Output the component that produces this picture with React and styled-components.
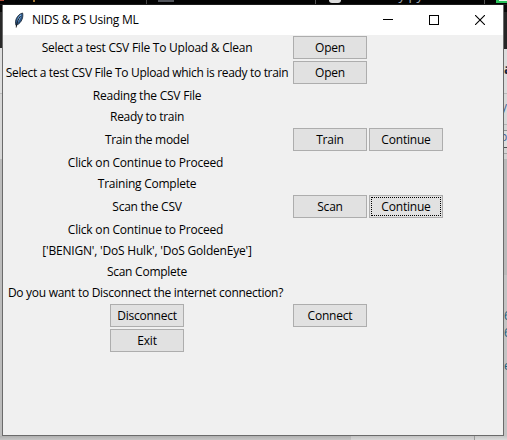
import React from "react";
import styled, { createGlobalStyle } from "styled-components";

const Global = createGlobalStyle`
  * { box-sizing: border-box; }
  body { margin: 0; overflow: hidden; background: #c9c9c9; }
`;

const Desktop = styled.div`
  width: 507px;
  height: 440px;
  overflow: hidden;
  display: grid;
  grid-template-columns: 2px 502px 3px;
  grid-template-rows: 5px 431px 4px;
  font-family: "Open Sans", "Noto Sans", sans-serif;
`;

const TopStrip = styled.div`
  grid-column: 1 / -1;
  position: relative;
  overflow: hidden;
  background: #030303;
  border-bottom: 1px solid #1c1c1c;
`;

const Speck = styled.span`
  position: absolute;
  top: 0;
  left: ${(p) => p.$x}px;
  width: ${(p) => p.$w}px;
  height: ${(p) => p.$h}px;
  background: ${(p) => p.$color};
  border-radius: ${(p) => p.$round || "0"};
`;

const TabText = styled.span`
  position: absolute;
  left: 386px;
  top: -14px;
  font-size: 13px;
  line-height: 18px;
  color: #a5adba;
`;

const LeftEdge = styled.div`
  background: linear-gradient(#080808 0 7px, #292929 7px 43px, #dedede 43px 88px, #bdbdbd 88px 89px, #d7d7d7 89px 154px, #bcbcbc 154px);
`;

const RightEdge = styled.div`
  position: relative;
  overflow: hidden;
  background: linear-gradient(
    #080808 0 7px, #262626 7px 44px, #dcdcdc 44px 88px, #bbb 88px 89px,
    #d9d9d9 89px 119px, #b5b5b5 119px 120px, #d5d5d5 120px 125px, #929292 125px 126px,
    #dedede 126px 142px, #505050 142px 143px, #d5d5d5 143px 148px, #a5a5a5 148px 149px,
    #d3d3d3 149px 154px, #bababa 154px 270px, #c4c4c4 270px
  );
`;

const EdgeGlyph = styled.span`
  position: absolute;
  left: ${(p) => p.$x}px;
  top: ${(p) => p.$y}px;
  font-size: ${(p) => p.$size || 12}px;
  font-weight: ${(p) => p.$weight || 400};
  line-height: 16px;
  color: ${(p) => p.$color};
`;

const BottomEdge = styled.div`
  grid-column: 1 / -1;
  display: grid;
  grid-template-columns: 351px 123px 1px 1fr;
  background: linear-gradient(#b0b0b0, #c6c6c6);
`;

const BottomPart = styled.div`
  background: ${(p) => p.$bg};
`;

const Window = styled.main`
  display: flex;
  flex-direction: column;
  background: #f0f0f0;
  border: 1px solid #6b6b6b;
  border-top: 0;
`;

const TitleBar = styled.header`
  display: flex;
  align-items: center;
  height: 30px;
  flex: none;
  padding-left: 10px;
  background: #fff;
`;

const Feather = styled.svg`
  display: block;
  width: 12px;
  height: 18px;
`;

const Title = styled.h1`
  flex: 1;
  margin: 0 0 0 7px;
  font-size: 12px;
  font-weight: 400;
  line-height: 16px;
  letter-spacing: ${(p) => p.$tracking}px;
  white-space: nowrap;
  color: #000;
`;

const Controls = styled.div`
  display: flex;
  align-self: stretch;
`;

const Control = styled.button`
  display: grid;
  place-items: center;
  width: 46px;
  padding: 0;
  border: 0;
  background: none;
`;

const Form = styled.div`
  display: grid;
  grid-template-columns: 288px 78px 74px;
  grid-template-rows: 25px 25px 21px 21px 25px 21px 21px 25px 21px 21px 21px 21px 25px 25px;
  place-items: center;
`;

const Label = styled.span`
  grid-column: 1;
  padding-right: ${(p) => (p.$trailing ? 3 : 0)}px;
  font-size: 12px;
  line-height: 17px;
  letter-spacing: ${(p) => p.$tracking}px;
  white-space: nowrap;
  color: #000;
`;

const Button = styled.button`
  grid-column: ${(p) => p.$col};
  display: grid;
  place-items: center;
  width: 74px;
  height: 23px;
  padding: 0;
  border: 1px solid #adadad;
  background: #e1e1e1;
  font-family: inherit;
  font-size: 12px;
  line-height: 17px;
  letter-spacing: ${(p) => p.$tracking}px;
  color: #000;
`;

const FocusRing = styled.span`
  display: grid;
  place-items: center;
  width: 70px;
  height: 19px;
  border: 1px dotted #000;
`;

const rows = [
  { label: "Select a test CSV File To Upload & Clean", t: -0.24, buttons: [["Open", -0.2]] },
  { label: "Select a test CSV File To Upload which is ready to train", t: -0.32, buttons: [["Open", -0.2]] },
  { label: "Reading the CSV File", t: -0.23 },
  { label: "Ready to train", t: -0.3 },
  { label: "Train the model", t: -0.3, buttons: [["Train", -0.2], ["Continue", -0.2]] },
  { label: "Click on Continue to Proceed", t: -0.2, trailing: true },
  { label: "Training Complete", t: -0.25 },
  { label: "Scan the CSV", t: -0.25, buttons: [["Scan", -0.2], ["Continue", -0.2, true]] },
  { label: "Click on Continue to Proceed", t: -0.2, trailing: true },
  { label: "['BENIGN', 'DoS Hulk', 'DoS GoldenEye']", t: -0.2 },
  { label: "Scan Complete", t: -0.25 },
  { label: "Do you want to Disconnect the internet connection?", t: -0.29, trailing: true },
];

export default function App() {
  return (
    <>
      <Global />
      <Desktop>
        <TopStrip>
          <Speck $x={0} $w={4} $h={1} $color="#b44b36" />
          <Speck $x={33} $w={2} $h={2} $color="#a47635" />
          <Speck $x={146} $w={1} $h={4} $color="#454545" />
          <Speck $x={158} $w={16} $h={2} $color="#51545b" />
          <Speck $x={315} $w={1} $h={4} $color="#555" />
          <Speck $x={329} $w={12} $h={3} $color="#ddd" $round="0 0 7px 7px" />
          <TabText>ary.py</TabText>
          <Speck $x={484} $w={1} $h={4} $color="#555" />
          <Speck $x={496} $w={11} $h={3} $color="#28c35a" />
          <Speck $x={499} $w={8} $h={1} $color="#e8f8ed" />
        </TopStrip>
        <LeftEdge />
        <Window>
          <TitleBar>
            <Feather viewBox="0 0 12 18">
              <path d="M3 14.5C1.2 10 4 3.5 9.6 2C10.6 6 8.8 11.5 4 14Z" fill="#2c5788" stroke="#1a2430" strokeWidth=".8" />
              <path d="M4.4 10C4.4 7 6.2 4.2 8.2 3.2C8.4 6 7 8.4 4.6 11.4Z" fill="#86b6e6" />
              <path d="M3.2 16.5C3.6 12 5.2 8 7.6 5" fill="none" stroke="#111" strokeWidth=".9" />
            </Feather>
            <Title $tracking={-0.26}>NIDS &amp; PS Using ML</Title>
            <Controls>
              <Control aria-label="Minimize">
                <svg width="10" height="10" shapeRendering="crispEdges"><path d="M0 4.5H10" stroke="#000" /></svg>
              </Control>
              <Control aria-label="Maximize">
                <svg width="10" height="10" shapeRendering="crispEdges"><path d="M.5 .5H9.5V9.5H.5Z" fill="none" stroke="#000" /></svg>
              </Control>
              <Control aria-label="Close">
                <svg width="10" height="10"><path d="M0 0L10 10M10 0L0 10" stroke="#000" strokeWidth="1.1" /></svg>
              </Control>
            </Controls>
          </TitleBar>
          <Form>
            {rows.map((row, i) => (
              <React.Fragment key={i}>
                <Label $tracking={row.t} $trailing={row.trailing}>{row.label}</Label>
                {(row.buttons || []).map(([text, t, focused], j) => (
                  <Button key={j} $col={j + 2} $tracking={t}>
                    {focused ? <FocusRing>{text}</FocusRing> : text}
                  </Button>
                ))}
              </React.Fragment>
            ))}
            <Button $col={1} $tracking={-0.25}>Disconnect</Button>
            <Button $col={2} $tracking={-0.2}>Connect</Button>
            <Button $col={1} $tracking={-0.2}>Exit</Button>
          </Form>
        </Window>
        <RightEdge>
          <EdgeGlyph $x={0} $y={56} $size={14} $weight={700} $color="#182638">a</EdgeGlyph>
          <EdgeGlyph $x={-3} $y={94} $color="#4b6593">y</EdgeGlyph>
          <EdgeGlyph $x={-4} $y={124} $color="#4b5d91">b</EdgeGlyph>
          <EdgeGlyph $x={0} $y={303} $color="#216079">6</EdgeGlyph>
          <EdgeGlyph $x={0} $y={320} $color="#216079">6</EdgeGlyph>
          <EdgeGlyph $x={0} $y={353} $color="#216079">e</EdgeGlyph>
        </RightEdge>
        <BottomEdge>
          <BottomPart />
          <BottomPart $bg="linear-gradient(#c2c2c2, #d8d8d8)" />
          <BottomPart $bg="#999" />
          <BottomPart $bg="linear-gradient(#c6c6c6, #dcdcdc)" />
        </BottomEdge>
      </Desktop>
    </>
  );
}
